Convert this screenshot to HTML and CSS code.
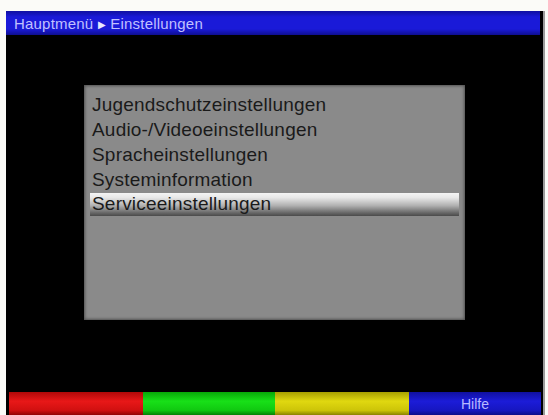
FILE: index.html
```html
<!DOCTYPE html>
<html>
<head>
<meta charset="utf-8">
<link rel="stylesheet" href="styles.css">
</head>
<body>
<div class="screen">
  <div class="titlebar"><span class="title">Hauptmenü <span class="arrow">&#9654;</span> Einstellungen</span></div>
  <div class="panel">
    <ul class="menu">
      <li class="item">Jugendschutzeinstellungen</li>
      <li class="item">Audio-/Videoeinstellungen</li>
      <li class="item">Spracheinstellungen</li>
      <li class="item">Systeminformation</li>
      <li class="item selected">Serviceeinstellungen</li>
    </ul>
  </div>
  <div class="footer">
    <div class="key red"></div>
    <div class="key green"></div>
    <div class="key yellow"></div>
    <div class="key blue">Hilfe</div>
  </div>
</div>
</body>
</html>
```
FILE: styles.css
```css
html, body {
  margin: 0;
  padding: 0;
  background: #fbfbf8;
  width: 548px;
  height: 415px;
  overflow: hidden;
}
.screen {
  margin: 11px 0 0 6px;
  width: 537px;
  height: 404px;
  background: #000;
  border-right: 2px solid #9a9a9a;
  display: flex;
  flex-direction: column;
  font-family: "Liberation Sans", Arial, sans-serif;
}
.titlebar {
  width: 534px;
  height: 24px;
  background: linear-gradient(to bottom, #1010a0 0%, #1a1ad8 25%, #1a1ad8 75%, #0e0e90 100%);
  display: flex;
  align-items: center;
  padding-left: 8px;
  box-sizing: border-box;
}
.title {
  color: #c0c0ff;
  font-size: 15px;
  letter-spacing: 0.2px;
}
.arrow {
  font-size: 10px;
  color: #e8e8ff;
  position: relative;
  top: -1px;
}
.panel {
  margin: 50px 0 0 78px;
  width: 381px;
  height: 235px;
  background: #8a8a8a;
  box-shadow: inset 0 0 3px 1px #505050;
  box-sizing: border-box;
  padding: 7px 6px 0 6px;
}
.menu {
  list-style: none;
  margin: 0;
  padding: 0;
}
.item {
  height: 25px;
  line-height: 25px;
  font-size: 19px;
  letter-spacing: 0.2px;
  color: #1a1a1a;
  padding-left: 2px;
}
.selected {
  background: linear-gradient(to bottom, #f4f4f4 0%, #e8e8e8 20%, #b0b0b0 55%, #6a6a6a 85%, #4a4a4a 100%);
  height: 23px;
  line-height: 22px;
  margin-top: 1px;
}
.footer {
  margin-top: auto;
  margin-left: 3px;
  width: 532px;
  height: 23px;
  display: flex;
}
.key {
  height: 23px;
  flex: none;
  color: #b8b8ff;
  font-size: 14px;
  display: flex;
  align-items: center;
  justify-content: center;
}
.red { width: 134px; background: linear-gradient(to bottom, #b00808, #e81818 40%, #d01010 80%, #900404); }
.green { width: 132px; background: linear-gradient(to bottom, #08a808, #18e018 40%, #10c810 80%, #068006); }
.yellow { width: 134px; background: linear-gradient(to bottom, #a8a000, #e0d810 40%, #ccc408 80%, #8a8200); }
.blue { width: 132px; background: linear-gradient(to bottom, #1010a0, #1c1cd8 40%, #1616c0 80%, #0c0c88); }
```
